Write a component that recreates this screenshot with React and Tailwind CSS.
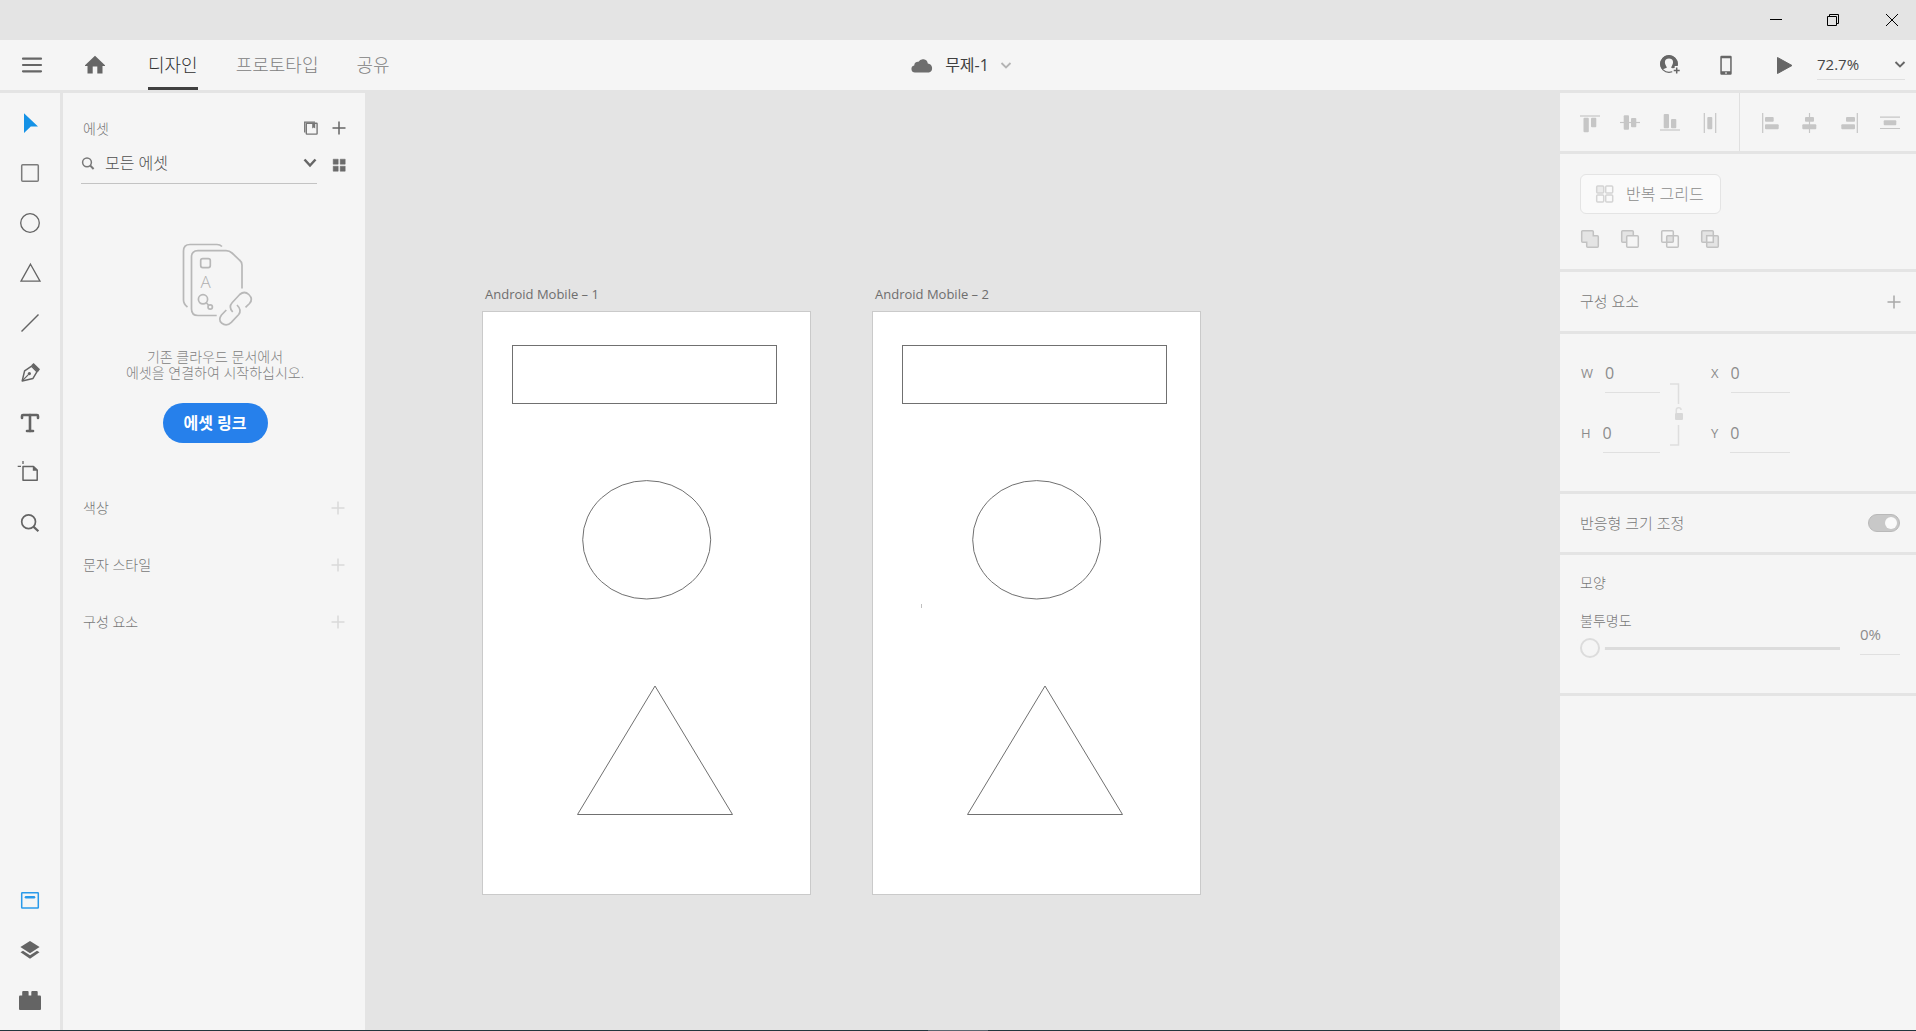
import React, { useState } from "react";
import { Type } from "lucide-react";

const tabs = ["디자인", "프로토타입", "공유"];

const Icon = ({ children, className = "", size = 20 }) => (
    <svg
        width={size}
        height={size}
        viewBox={`0 0 ${size} ${size}`}
        fill="none"
        stroke="currentColor"
        strokeWidth="1.5"
        className={`shrink-0 overflow-visible ${className}`}
        aria-hidden="true"
    >
        {children}
    </svg>
);

const Plus = ({ className }) => (
    <Icon size={14} className={className}>
        <path d="M7 .5v13M.5 7h13" />
    </Icon>
);

const tools = [
    {
        name: "선택",
        icon: (
            <Icon className="text-[#1592e6]">
                <path d="M4 0.3 18 13.4H10.8L4 20z" fill="currentColor" stroke="none" />
            </Icon>
        ),
    },
    {
        name: "사각형",
        icon: (
            <Icon className="text-[#7c7c7c]">
                <rect x="1.7" y="1.7" width="16.6" height="16.6" rx="1" />
            </Icon>
        ),
    },
    {
        name: "타원",
        icon: (
            <Icon>
                <circle cx="10" cy="10" r="9.3" strokeWidth="1.3" />
            </Icon>
        ),
    },
    {
        name: "다각형",
        icon: (
            <Icon>
                <path d="M10.5 1.2 20 18.2H1z" strokeWidth="1.3" />
            </Icon>
        ),
    },
    {
        name: "선",
        icon: (
            <Icon>
                <path d="M1.5 18.5 18.5 1.5" />
            </Icon>
        ),
    },
    {
        name: "펜",
        icon: (
            <Icon>
                <path d="M2.2 17.9 4.6 7.8 11.6 3.2 17 8.7 13 15.4z" strokeLinejoin="round" />
                <path d="M2.4 17.7 8.6 11.4" strokeWidth="1.2" />
                <circle cx="9.4" cy="10.6" r="1.6" fill="currentColor" stroke="none" />
                <path d="M11.2 2.2 13.6 0 20 6.3 17.8 9.2z" fill="currentColor" stroke="none" />
            </Icon>
        ),
    },
    { name: "텍스트", icon: <Type size={24} strokeWidth={2.6} aria-hidden="true" /> },
    {
        name: "대지",
        icon: (
            <Icon>
                <path d="M3 3.5H13.5L17.2 7V17.2H3z" strokeLinejoin="round" />
                <path d="M12.8 2.8 18 7.8H12.8z" fill="currentColor" stroke="none" />
                <path d="M3 -2V1M-2.3 3.3H1" strokeWidth="1.3" />
            </Icon>
        ),
    },
    {
        name: "확대/축소",
        icon: (
            <Icon>
                <circle cx="8.6" cy="8.8" r="6.9" strokeWidth="1.7" />
                <path d="M13.4 13.6 18.4 18.3" strokeWidth="2.2" />
            </Icon>
        ),
    },
];

const panelButtons = [
    {
        name: "에셋 패널",
        icon: (
            <Icon className="text-[#2a9aea]">
                <rect x="1.7" y="2.7" width="16.6" height="15.3" rx="0.5" />
                <path d="M6 7.2h8" strokeWidth="2.6" strokeLinecap="round" />
            </Icon>
        ),
    },
    {
        name: "레이어",
        icon: (
            <Icon>
                <g fill="currentColor" stroke="none">
                    <path d="M10 1 19.6 7 10 13.2.4 7z" />
                    <path d="M.5 12.3 3 10.7 10 15.2 17 10.7 19.5 12.3 10 18.8z" />
                </g>
            </Icon>
        ),
    },
    {
        name: "플러그인",
        icon: (
            <Icon>
                <g fill="currentColor" stroke="none">
                    <rect x="-1" y="5.5" width="22" height="14.5" rx="1" />
                    <rect x="2.2" y="1" width="6.4" height="8" rx="1" />
                    <rect x="11.3" y="1" width="6.4" height="8" rx="1" />
                </g>
            </Icon>
        ),
    },
];

// line = guide the bars are aligned to, bars = [x, y, width, height]
const verticalAligns = [
    { name: "위쪽 정렬", line: "M0 3h20", bars: [[3.5, 4.7, 5.3, 14.5], [11, 4.7, 5.3, 9.5]] },
    { name: "세로 가운데 정렬", line: "M0 9.5h20", bars: [[3.7, 2.3, 5.3, 14.5], [11, 5, 5.3, 9.3]] },
    { name: "아래쪽 정렬", line: "M0 17h20", bars: [[3.7, 1, 5.3, 14.3], [11, 6, 5.3, 9.3]] },
    { name: "가로 분포", line: "M4.3 0v20M15.7 0v20", bars: [[7.3, 4, 5, 12.3]] },
];

const horizontalAligns = [
    { name: "왼쪽 정렬", line: "M2.7 0v20", bars: [[5, 4, 8.7, 4.7], [5, 11.3, 13.7, 5]] },
    { name: "가로 가운데 정렬", line: "M9.5 0v20", bars: [[5, 4, 9, 4.7], [2.3, 11.3, 14, 5]] },
    { name: "오른쪽 정렬", line: "M17.3 0v20", bars: [[6, 4, 9, 4.7], [1.3, 11.3, 13.7, 5]] },
    { name: "세로 분포", line: "M0 4.2h20M0 15.5h20", bars: [[3.7, 7.3, 12.6, 5]] },
];

const AlignButton = ({ item }) => (
    <button type="button" aria-label={item.name} className="text-[#c6c6c6]">
        <Icon>
            <path d={item.line} strokeWidth="1.2" />
            {item.bars.map(([x, y, w, h]) => (
                <rect key={`${x}-${y}`} x={x} y={y} width={w} height={h} rx="1" fill="currentColor" stroke="none" />
            ))}
        </Icon>
    </button>
);

const booleans = [
    {
        name: "추가",
        shape: (
            <path
                d="M2.7 1.7h9.6a1 1 0 0 1 1 1v4h4a1 1 0 0 1 1 1v9.6a1 1 0 0 1-1 1H7.7a1 1 0 0 1-1-1v-4h-4a1 1 0 0 1-1-1V2.7a1 1 0 0 1 1-1z"
                fill="#e4e4e4"
            />
        ),
    },
    {
        name: "빼기",
        shape: (
            <>
                <rect x="1.7" y="1.7" width="11.6" height="11.6" rx="1" fill="#e4e4e4" />
                <rect x="6.7" y="6.7" width="11.6" height="11.6" rx="1" fill="#f5f5f5" />
            </>
        ),
    },
    {
        name: "교차",
        shape: (
            <>
                <rect x="6.7" y="6.7" width="6.6" height="6.6" fill="#e0e0e0" stroke="none" />
                <rect x="1.7" y="1.7" width="11.6" height="11.6" rx="1" />
                <rect x="6.7" y="6.7" width="11.6" height="11.6" rx="1" />
            </>
        ),
    },
    {
        name: "오버랩 제외",
        shape: (
            <>
                <rect x="1.7" y="1.7" width="11.6" height="11.6" rx="1" fill="#e4e4e4" />
                <rect x="6.7" y="6.7" width="11.6" height="11.6" rx="1" fill="#e4e4e4" />
                <rect x="6.7" y="6.7" width="6.6" height="6.6" fill="#f5f5f5" />
            </>
        ),
    },
];

const artboards = [
    { name: "Android Mobile – 1", place: "left-[117px]" },
    { name: "Android Mobile – 2", place: "left-[507px]" },
];

const TitleBar = () => (
    <div className="flex h-10 shrink-0 items-center justify-end pr-[13px] text-black">
        <button type="button" aria-label="최소화" className="flex h-10 w-[57px] items-center justify-center">
            <Icon size={12}>
                <path d="M0 5.5h12" strokeWidth="1" />
            </Icon>
        </button>
        <button type="button" aria-label="이전 크기로 복원" className="flex h-10 w-[57px] items-center justify-center">
            <Icon size={12}>
                <path d="M.5 2.5h9v9h-9zM2.5 2.5V.5h9v9h-2" strokeWidth="1" />
            </Icon>
        </button>
        <button type="button" aria-label="닫기" className="ml-5 flex h-10 items-center justify-center px-[5px]">
            <Icon size={12}>
                <path d="M0 0 12 12M12 0 0 12" strokeWidth="1" />
            </Icon>
        </button>
    </div>
);

const Toolbar = () => {
    const [active, setActive] = useState(tabs[0]);

    return (
        <header className="flex h-[50px] shrink-0 items-stretch bg-[#f5f5f5] text-[#666]">
            <div className="flex flex-1 items-stretch">
                <button type="button" aria-label="메뉴" className="ml-[22px]">
                    <Icon>
                        <path d="M1 3.7h18M1 10h18M1 16.3h18" strokeWidth="2.2" strokeLinecap="round" />
                    </Icon>
                </button>
                <button type="button" aria-label="홈" className="ml-[43px]">
                    <Icon>
                        <path
                            d="M10 .8 20 10.3v.7h-2.5v7.5h-5.2v-7H7.7v7H2.5V11H0v-.7z"
                            fill="currentColor"
                            stroke="none"
                        />
                    </Icon>
                </button>
                <nav className="ml-[43px] flex gap-[38px] text-lg font-light">
                    {tabs.map((tab) => (
                        <button
                            key={tab}
                            type="button"
                            onClick={() => setActive(tab)}
                            className={
                                tab === active
                                    ? "border-y-3 border-t-transparent border-b-[#404040] text-[#303030]"
                                    : "border-y-3 border-transparent text-[#808080]"
                            }
                        >
                            {tab}
                        </button>
                    ))}
                </nav>
            </div>

            <button type="button" className="flex items-center pl-1.5 text-base text-[#404040]">
                <Icon size={22} className="text-[#6e6e6e]">
                    <path
                        d="M4 18.5a3.6 3.6 0 0 1-.8-7.1 3.7 3.7 0 0 1 4.3-3.6 5 5 0 0 1 9.3 1.6 4.7 4.7 0 0 1 1.2 9.1z"
                        fill="currentColor"
                        stroke="none"
                    />
                </Icon>
                <span className="ml-3">무제-1</span>
                <Icon size={10} className="ml-3 text-[#b4b4b4]">
                    <path d="M.5 3 5 7.5 9.5 3" strokeWidth="1.8" />
                </Icon>
            </button>

            <div className="flex flex-1 items-center justify-end">
                <button type="button" aria-label="초대">
                    <Icon>
                        <circle cx="9" cy="9" r="8.4" strokeWidth="1.2" />
                        <path
                            d="M9 .3a8.7 8.7 0 0 0-6.500 14.500c1-1 2.600-1.300 3.800-1.700.5-.3.5-1.200.1-1.700C4 8 4.300 3.500 9 3.500s5 4.500 2.600 7.900c-.4.5-.4 1.400.1 1.700l1.300.4 4-1.500A8.700 8.700 0 0 0 9 .3z"
                            fill="currentColor"
                            stroke="none"
                        />
                        <path d="M16.7 11v9M12.2 15.5h9" stroke="#f5f5f5" strokeWidth="4" />
                        <path d="M16.7 12.5v6M13.7 15.5h6" strokeWidth="1.5" />
                    </Icon>
                </button>
                <button type="button" aria-label="디바이스 미리보기" className="ml-9">
                    <Icon>
                        <path
                            d="M5.500.8h9a1.200 1.200 0 0 1 1.200 1.200v16.500a1.200 1.200 0 0 1-1.200 1.200h-9a1.200 1.200 0 0 1-1.200-1.200V2A1.200 1.200 0 0 1 5.500.8zM5.800 3.300v12.900h8.400V3.300zM9.300 17.200v1.600h1.400v-1.600z"
                            fill="currentColor"
                            fillRule="evenodd"
                            stroke="none"
                        />
                    </Icon>
                </button>
                <button type="button" aria-label="재생" className="ml-10">
                    <Icon>
                        <path d="M1.5 2.5 16 10.5 1.5 18.5z" fill="currentColor" strokeLinejoin="round" strokeWidth="1" />
                    </Icon>
                </button>
                <label className="relative mr-[11px] ml-[21px] flex w-22 items-center border-b border-[#e0e0e0]">
                    <select
                        aria-label="확대/축소 비율"
                        className="h-7 w-full appearance-none text-[15px] text-[#464646] outline-none"
                        defaultValue="72.7%"
                    >
                        <option>50%</option>
                        <option>72.7%</option>
                        <option>100%</option>
                    </select>
                    <Icon size={10} className="pointer-events-none absolute right-0">
                        <path d="M.5 2 5 6.5 9.5 2" strokeWidth="1.9" />
                    </Icon>
                </label>
            </div>
        </header>
    );
};

const ToolRail = () => (
    <aside className="flex w-15 shrink-0 flex-col justify-between bg-[#f5f5f5] py-[5px] text-[#646464]">
        <div>
            {tools.map((tool) => (
                <button key={tool.name} type="button" aria-label={tool.name} className="flex h-[50px] w-full items-center justify-center">
                    {tool.icon}
                </button>
            ))}
        </div>
        <div>
            {panelButtons.map((item) => (
                <button key={item.name} type="button" aria-label={item.name} className="flex h-[50px] w-full items-center justify-center">
                    {item.icon}
                </button>
            ))}
        </div>
    </aside>
);

const AssetsPanel = () => (
    <aside className="flex w-[302px] shrink-0 flex-col bg-[#f5f5f5] pr-[19px] pl-5 text-[14px] font-light text-[#787878]">
        <div className="mt-[25px] flex h-5 items-center">
            <h2 className="flex-1">에셋</h2>
            <button type="button" aria-label="라이브러리 관리" className="text-[#777]">
                <Icon size={14}>
                    <path d="M.7 11.5V1.2H11" strokeWidth="1.300" />
                    <rect x="2.300" y="2.300" width="10.800" height="10.800" rx="0.500" strokeWidth="1.400" />
                    <path d="M8.200 2.600h3v5l-1.500-1.200-1.500 1.200z" fill="currentColor" stroke="none" />
                </Icon>
            </button>
            <button type="button" aria-label="에셋 추가" className="ml-3.5 text-[#666]">
                <Plus />
            </button>
        </div>

        <div className="mt-[5px] -ml-0.5 flex items-center">
            <label className="relative flex h-[41px] flex-1 items-center border-b border-[#c3c3c3]">
                <Icon size={14} className="absolute left-0">
                    <circle cx="6" cy="6.300" r="4.400" />
                    <path d="M9.200 9.500 12.600 13" strokeWidth="1.900" />
                </Icon>
                <select
                    aria-label="에셋 필터"
                    className="h-full w-full appearance-none pl-6 text-base text-[#505050] outline-none"
                >
                    <option>모든 에셋</option>
                    <option>색상</option>
                    <option>문자 스타일</option>
                </select>
                <Icon size={14} className="pointer-events-none absolute right-0 text-[#666]">
                    <path d="M1.500 3.500 7 9.500 12.500 3.500" strokeWidth="2.500" />
                </Icon>
            </label>
            <button type="button" aria-label="격자 보기" className="ml-[15px] text-[#6b6b6b]">
                <Icon size={14}>
                    <path
                        d="M1.200 2.200h5v5h-5zM8.200 2.200h5v5h-5zM1.200 9.200h5v5h-5zM8.200 9.200h5v5h-5z"
                        fill="currentColor"
                        strokeWidth="0.500"
                        strokeLinejoin="round"
                    />
                </Icon>
            </button>
        </div>

        <div className="mt-[59px] flex flex-col items-center pl-px text-center">
            <svg
                width="70"
                height="84"
                viewBox="0 0 70 84"
                fill="none"
                stroke="#b8b8b8"
                strokeWidth="1.7"
                className="ml-1 overflow-visible"
                aria-hidden="true"
            >
                <path d="M40 3.500Q38 1.500 35 1.500H8Q1.500 1.500 1.500 8V57Q1.500 61 5.500 64" />
                <path d="M34.700 72.500H16Q9.500 72.500 9.500 66V14Q9.500 7.700 16 7.700H44Q47.500 7.700 50 10L57.500 17Q60 19 60 22V45.500" />
                <rect x="18.700" y="15.600" width="9.600" height="9" rx="2" />
                <text x="23.500" y="44.500" textAnchor="middle" fill="#b0b0b0" stroke="none" fontSize="17">A</text>
                <circle cx="21" cy="56.300" r="4.600" />
                <circle cx="28.200" cy="64" r="2.200" />
                <path d="M24.300 59.700 26.600 62.300" />
                <path d="M50.700 69C48 66 47.500 62.500 50.300 59.500L57.700 51.500Q62.500 47.500 66.800 51.500 71.500 56 67.500 60.500L63.500 64.300" />
                <path d="M44.300 67 39.500 72Q36 76.500 39.500 80 44.500 84 49.300 79.300L56.700 71.500Q60 67 55 62" />
            </svg>
            <p className="mt-[22px] leading-4 text-[#828282]">
                기존 클라우드 문서에서
                <br />
                에셋을 연결하여 시작하십시오.
            </p>
            <button type="button" className="mt-[22px] h-10 w-[105px] rounded-full bg-[#2680eb] text-base font-bold text-white">
                에셋 링크
            </button>
        </div>

        <div className="mt-9">
            {["색상", "문자 스타일", "구성 요소"].map((label) => (
                <div key={label} className="flex h-[57px] items-center justify-between">
                    <h3>{label}</h3>
                    <button type="button" aria-label={`${label} 추가`} className="mr-px text-[#d9d9d9]">
                        <Plus />
                    </button>
                </div>
            ))}
        </div>
    </aside>
);

const Canvas = () => (
    <main className="relative min-w-0 flex-1 overflow-hidden">
        {artboards.map((board) => (
            <section key={board.name} className={`absolute top-[189px] ${board.place}`}>
                <h2 className="mb-[5px] ml-[3px] text-[13px] leading-6 text-[#6e6e6e]">{board.name}</h2>
                <svg
                    width="329"
                    height="584"
                    viewBox="0 0 327 582"
                    fill="none"
                    stroke="#707070"
                    className="border border-[#cacaca] bg-white"
                >
                    <rect x="29.5" y="33.5" width="264" height="58" />
                    <ellipse cx="163.700" cy="227.800" rx="64" ry="59.200" />
                    <path d="M172 374 249.500 502.500H94.500z" />
                </svg>
            </section>
        ))}
        <span className="absolute top-[511px] left-[556px] h-1 w-px bg-[#c0c0c0]" />
    </main>
);

const Field = ({ label }) => (
    <label className="flex h-10 w-[79px] items-start gap-3 text-[13px] leading-5">
        {label}
        <input
            type="text"
            defaultValue="0"
            className="h-[30px] min-w-0 flex-1 border-b border-[#e0e0e0] pb-[9px] text-base leading-5 outline-none"
        />
    </label>
);

const PropertyPanel = () => {
    const [responsive, setResponsive] = useState(true);

    return (
        <aside className="flex w-[356px] shrink-0 flex-col gap-[3px] text-[#8c8c8c]">
            <div className="flex h-[58px] shrink-0 items-stretch bg-[#f5f5f5]">
                <div className="flex items-center gap-5 border-r border-[#e0e0e0] pt-0.5 pr-[19px] pl-5">
                    {verticalAligns.map((item) => (
                        <AlignButton key={item.name} item={item} />
                    ))}
                </div>
                <div className="flex items-center gap-5 pt-0.5 pl-5">
                    {horizontalAligns.map((item) => (
                        <AlignButton key={item.name} item={item} />
                    ))}
                </div>
            </div>

            <div className="h-[115px] shrink-0 bg-[#f5f5f5] px-5 pt-5">
                <button
                    type="button"
                    className="flex h-10 w-[141px] items-center rounded-md border border-[#e4e4e4] bg-[#fafafa] pl-[14px] text-base font-light text-[#8c8c8c]"
                >
                    <Icon className="mr-[11px] text-[#d4d4d4]">
                        <rect x="1.700" y="2" width="7" height="7" rx="1" fill="#ececec" />
                        <rect x="10.700" y="2" width="7" height="7" rx="1" />
                        <rect x="1.700" y="11" width="7" height="7" rx="1" />
                        <rect x="10.700" y="11" width="7" height="7" rx="1" />
                    </Icon>
                    반복 그리드
                </button>
                <div className="mt-[15px] flex gap-5 text-[#c2c2c2]">
                    {booleans.map((item) => (
                        <button key={item.name} type="button" aria-label={item.name}>
                            <Icon>{item.shape}</Icon>
                        </button>
                    ))}
                </div>
            </div>

            <div className="flex h-[59px] shrink-0 items-center justify-between bg-[#f5f5f5] pr-[15px] pl-5">
                <h2 className="text-[15px] font-light text-[#787878]">구성 요소</h2>
                <button type="button" aria-label="구성 요소 추가" className="text-[#a8a8a8]">
                    <Plus />
                </button>
            </div>

            <div className="flex h-[157px] shrink-0 bg-[#f5f5f5] pt-[29px] pl-[21px]">
                <div className="flex flex-col gap-5">
                    <Field label="W" />
                    <Field label="H" />
                </div>
                <svg
                    width="14"
                    height="64"
                    viewBox="0 0 14 64"
                    fill="none"
                    stroke="#dedede"
                    strokeWidth="1.500"
                    className="mt-[19px] ml-2.5 overflow-visible"
                    aria-hidden="true"
                >
                    <path d="M0 2h8.500v20M8.500 43v20H0" />
                    <path d="M6.300 31v-2.500a2.400 2.400 0 0 1 4.800-.5" />
                    <rect x="5" y="31" width="8" height="7" rx="1" fill="#d8d8d8" stroke="none" />
                </svg>
                <div className="ml-[27px] flex flex-col gap-5">
                    <Field label="X" />
                    <Field label="Y" />
                </div>
            </div>

            <label className="flex h-[58px] shrink-0 items-center justify-between bg-[#f5f5f5] pr-4 pl-5 text-[15px] font-light text-[#787878]">
                반응형 크기 조정
                <input
                    type="checkbox"
                    role="switch"
                    checked={responsive}
                    onChange={() => setResponsive(!responsive)}
                    className="flex h-[18px] w-8 appearance-none items-center rounded-full border border-[#b9b9b9] bg-[#c8c8c8] px-0.5 before:h-3 before:w-3 before:rounded-full before:bg-[#fafafa] checked:justify-end"
                />
            </label>

            <div className="h-[138px] shrink-0 bg-[#f5f5f5] pt-[18px] pr-4 pl-5 text-[14px] leading-5">
                <h2 className="font-light text-[#787878]">모양</h2>
                <div className="mt-[18px] flex">
                    <div className="flex-1">
                        <label htmlFor="opacity" className="block font-light text-[#787878]">불투명도</label>
                        <input
                            id="opacity"
                            type="range"
                            defaultValue="0"
                            className="mt-[7px] block h-5 w-full appearance-none bg-[linear-gradient(#dcdcdc,#dcdcdc)] bg-[length:100%_3px] bg-center bg-no-repeat [&::-webkit-slider-thumb]:h-5 [&::-webkit-slider-thumb]:w-5 [&::-webkit-slider-thumb]:appearance-none [&::-webkit-slider-thumb]:rounded-full [&::-webkit-slider-thumb]:border-2 [&::-webkit-slider-thumb]:border-[#dcdcdc] [&::-webkit-slider-thumb]:bg-[#f5f5f5] [&::-webkit-slider-thumb]:shadow-[0_0_0_5px_#f5f5f5]"
                        />
                    </div>
                    <input
                        type="text"
                        aria-label="불투명도 값"
                        defaultValue="0%"
                        className="mt-3.5 ml-5 h-[30px] w-10 border-b border-[#e0e0e0] pb-[11px] text-[15px] outline-none"
                    />
                </div>
            </div>

            <div className="flex-1 bg-[#f5f5f5]" />
        </aside>
    );
};

const App = () => {
    return (
        <div className="flex h-screen flex-col overflow-hidden bg-[#e4e4e4] font-['Open_Sans','Noto_Sans_CJK_KR',sans-serif]">
            <TitleBar />
            <Toolbar />
            <div className="mt-[3px] flex min-h-0 flex-1 gap-[3px]">
                <ToolRail />
                <div className="flex min-w-0 flex-1">
                    <AssetsPanel />
                    <Canvas />
                    <PropertyPanel />
                </div>
            </div>
            <footer className="flex h-px shrink-0 justify-center bg-[#22363e]">
                <span className="w-15 bg-[#5a6670]" />
            </footer>
        </div>
    );
};

export default App;
